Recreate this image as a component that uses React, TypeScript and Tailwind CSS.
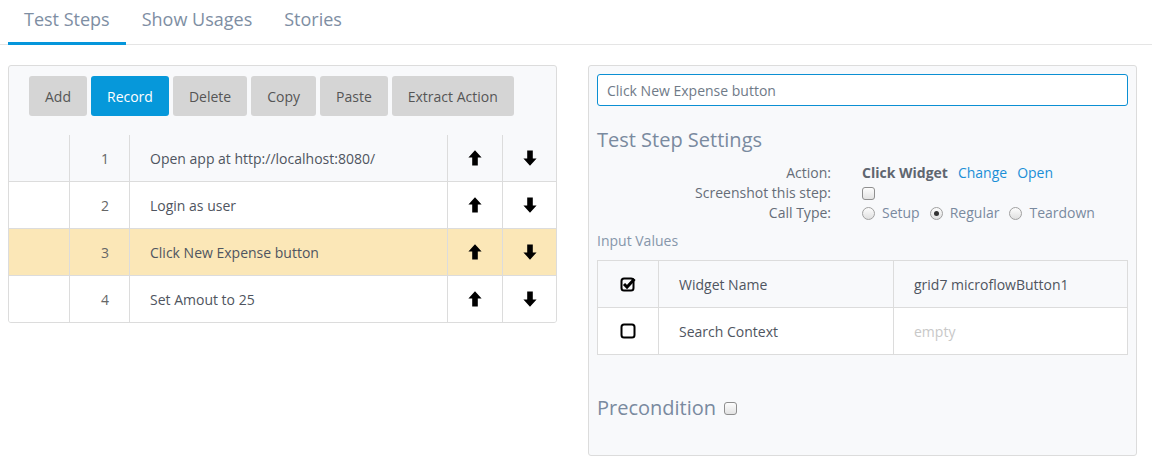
import React from "react";

const font = { fontFamily: '"Open Sans", "Noto Sans", sans-serif' };

function ArrowUp() {
  return (
    <svg width="14" height="16" viewBox="0 0 14 16">
      <path d="M7 0.3 L13.6 7.6 L9.8 7.6 L9.8 15.6 L4.2 15.6 L4.2 7.6 L0.4 7.6 Z" fill="#000" />
    </svg>
  );
}
function ArrowDown() {
  return (
    <svg width="14" height="16" viewBox="0 0 14 16">
      <path d="M7 15.7 L13.6 8.4 L9.8 8.4 L9.8 0.4 L4.2 0.4 L4.2 8.4 L0.4 8.4 Z" fill="#000" />
    </svg>
  );
}
function CheckSquare() {
  return (
    <svg width="16" height="16" viewBox="0 0 16 16">
      <rect x="1.5" y="2.5" width="12" height="12" rx="2.5" fill="none" stroke="#000" strokeWidth="2" />
      <path d="M4 8 L7 11 L14.5 3" fill="none" stroke="#000" strokeWidth="3" strokeLinejoin="miter" />
    </svg>
  );
}
function EmptySquare() {
  return (
    <svg width="16" height="16" viewBox="0 0 16 16">
      <rect x="1.5" y="1.5" width="13" height="13" rx="2.5" fill="none" stroke="#000" strokeWidth="2" />
    </svg>
  );
}
function Checkbox() {
  return (
    <span className="inline-block w-[13px] h-[13px] rounded-[3px] border border-[#8f8f8f] bg-gradient-to-b from-[#fdfdfd] to-[#e3e3e3]" />
  );
}
function Radio({ on }: { on?: boolean }) {
  return (
    <span className="inline-flex items-center justify-center w-[13px] h-[13px] rounded-full border border-[#a0a0a0] bg-gradient-to-b from-[#fdfdfd] to-[#e0e0e0]">
      {on && <span className="w-[5px] h-[5px] rounded-full bg-[#333]" />}
    </span>
  );
}

const steps = [
  { n: 1, t: "Open app at http://localhost:8080/", bg: "bg-[#f8f9fb]" },
  { n: 2, t: "Login as user", bg: "bg-white" },
  { n: 3, t: "Click New Expense button", bg: "bg-[#fbe7b7]" },
  { n: 4, t: "Set Amout to 25", bg: "bg-white" },
];

export default function App() {
  return (
    <div className="w-[1152px] h-[470px] bg-white text-[14px]" style={font}>
      {/* Tabs */}
      <div className="flex border-b border-[#e5e5e5] h-[45px] pl-[8px]">
        {["Test Steps", "Show Usages", "Stories"].map((t, i) => (
          <div
            key={t}
            className={`px-4 pt-[6px] h-[45px] text-[18px] text-[#7e8ea3] ${i === 0 ? "border-b-[3px] border-[#0596db]" : ""}`}
          >
            {t}
          </div>
        ))}
      </div>

      <div className="flex gap-[31px] pl-[8px] pt-[20px]">
        {/* Left panel */}
        <div className="w-[549px] self-start border border-[#dcdcdc] rounded-[3px] bg-[#f8f9fb] overflow-hidden">
          <div className="flex gap-[4px] pl-[20px] pt-[10px] pb-[19px]">
            {["Add", "Record", "Delete", "Copy", "Paste", "Extract Action"].map((b) => (
              <div
                key={b}
                className={`h-[40px] px-[16px] flex items-center rounded-[3px] ${
                  b === "Record" ? "bg-[#0698da] text-white" : "bg-[#d5d5d5] text-[#555]"
                }`}
              >
                {b}
              </div>
            ))}
          </div>
          <div>
            {steps.map((s, i) => (
              <div
                key={s.n}
                className={`grid grid-cols-[60px_60px_318px_55px_1fr] ${s.bg} ${
                  i < steps.length - 1 ? "h-[47px] border-b border-[#dcdcdc]" : "h-[46px]"
                }`}
              >
                <div />
                <div className="border-l border-[#dcdcdc] flex items-center justify-end pr-[20px] text-[#666]">{s.n}</div>
                <div className="border-l border-[#dcdcdc] flex items-center pl-[20px] text-[#4f5560]">{s.t}</div>
                <div className="border-l border-[#dcdcdc] flex items-center justify-center">
                  <ArrowUp />
                </div>
                <div className="border-l border-[#dcdcdc] flex items-center justify-center">
                  <ArrowDown />
                </div>
              </div>
            ))}
          </div>
        </div>

        {/* Right panel */}
        <div className="w-[549px] h-[391px] border border-[#dcdcdc] rounded-[3px] bg-[#f8f9fb] p-[8px]">
          <div className="h-[32px] border border-[#0b8fd3] rounded-[3px] bg-white flex items-center pl-[9px] text-[#6f7a88]">
            Click New Expense button
          </div>
          <div className="mt-[20px] text-[20px] leading-[28px] text-[#7a8a9f]">Test Step Settings</div>
          <div className="mt-[9px] grid grid-cols-[234px_1fr] gap-x-[31px] leading-[20px] text-[#666d78]">
            <div className="text-right">Action:</div>
            <div className="flex gap-[10px]">
              <span className="font-bold text-[#5f6670]">Click Widget</span>
              <span className="text-[#1b8fd7]">Change</span>
              <span className="text-[#1b8fd7]">Open</span>
            </div>
            <div className="text-right">Screenshot this step:</div>
            <div className="flex items-center">
              <Checkbox />
            </div>
            <div className="text-right">Call Type:</div>
            <div className="flex items-center text-[#7a8a9f]">
              <Radio />
              <span className="ml-[7px] mr-[10px]">Setup</span>
              <Radio on />
              <span className="ml-[7px] mr-[10px]">Regular</span>
              <Radio />
              <span className="ml-[7px]">Teardown</span>
            </div>
          </div>
          <div className="mt-[8px] leading-[20px] text-[#8696aa]">Input Values</div>
          <div className="mt-[9px] border border-[#dcdcdc]">
            <div className="grid grid-cols-[60px_235px_1fr] h-[47px] bg-[#f8f9fb] border-b border-[#dcdcdc]">
              <div className="flex items-center justify-center">
                <CheckSquare />
              </div>
              <div className="border-l border-[#dcdcdc] flex items-center pl-[20px] text-[#4f5560]">Widget Name</div>
              <div className="border-l border-[#dcdcdc] flex items-center pl-[20px] text-[#4f5560]">grid7 microflowButton1</div>
            </div>
            <div className="grid grid-cols-[60px_235px_1fr] h-[46px] bg-white">
              <div className="flex items-center justify-center">
                <EmptySquare />
              </div>
              <div className="border-l border-[#dcdcdc] flex items-center pl-[20px] text-[#4f5560]">Search Context</div>
              <div className="border-l border-[#dcdcdc] flex items-center pl-[20px] text-[#c8c8c8]">empty</div>
            </div>
          </div>
          <div className="mt-[39px] flex items-center text-[20px] leading-[28px] text-[#7a8a9f]">
            Precondition
            <span className="ml-[8px] flex items-center">
              <Checkbox />
            </span>
          </div>
        </div>
      </div>
    </div>
  );
}
